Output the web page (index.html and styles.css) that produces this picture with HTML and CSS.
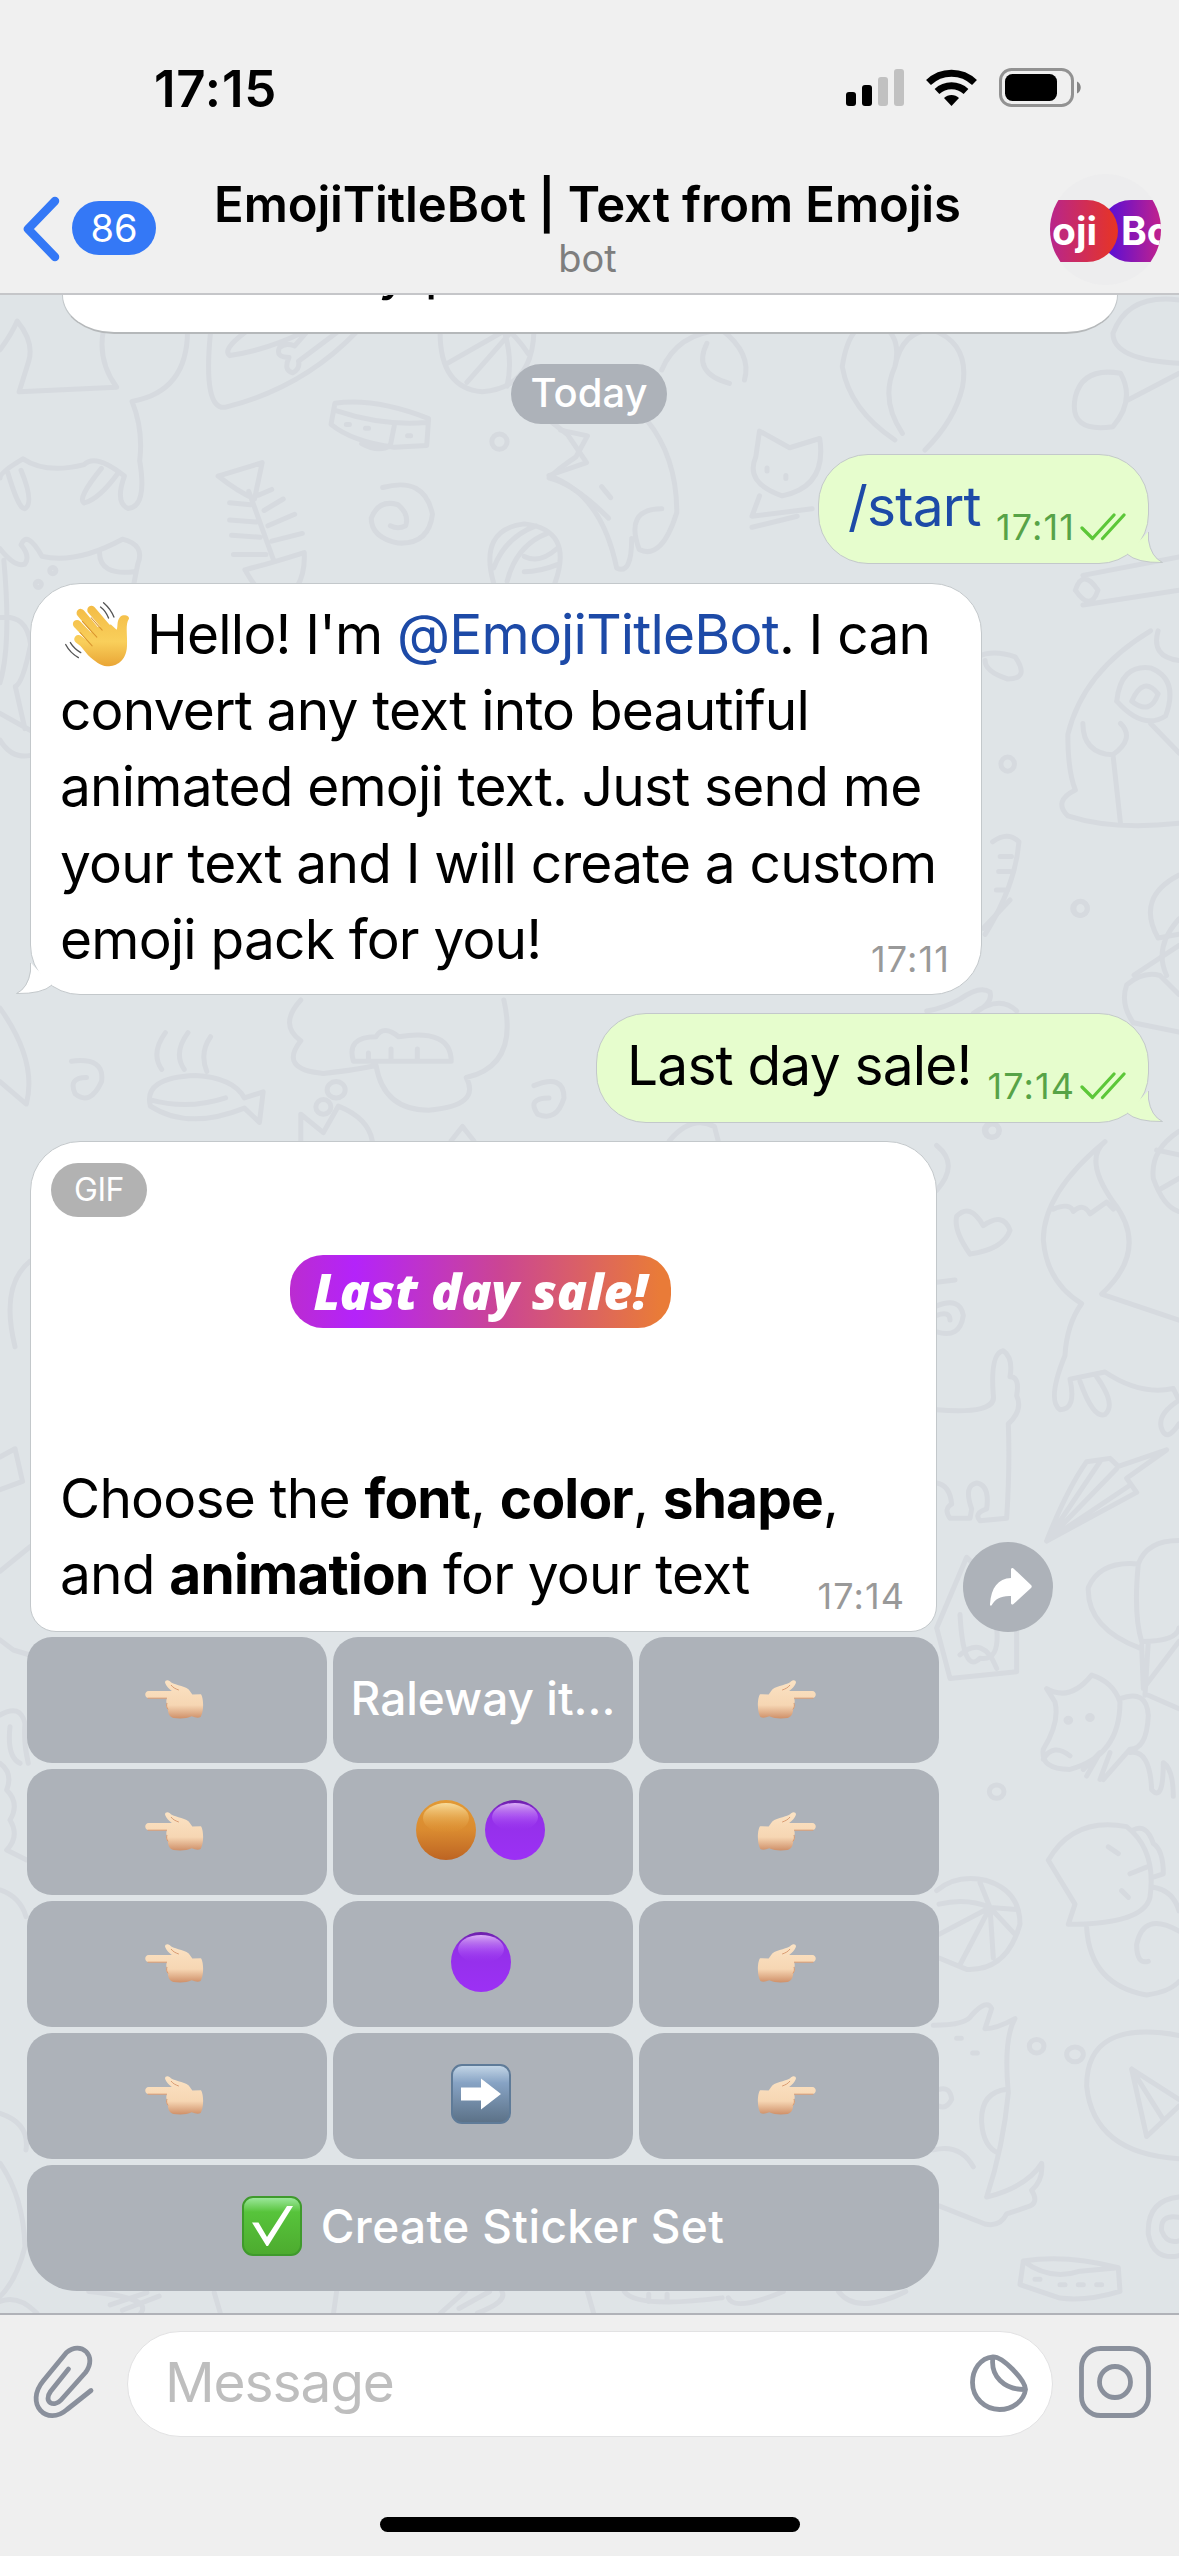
FILE: index.html
```html
<!DOCTYPE html>
<html lang="en">
<head>
    <meta charset="UTF-8">
    <meta name="viewport" content="width=device-width, initial-scale=1.0">
    <title>EmojiTitleBot | Text from Emojis</title>
    <link rel="stylesheet" href="styles.css">
</head>
<body>

    <!-- shared shapes -->
    <svg class="defs" width="0" height="0">
        <defs>
            <linearGradient id="skin" x1="0" y1="0" x2="0" y2="1">
                <stop offset="0" stop-color="#fbe3c4"/>
                <stop offset="0.65" stop-color="#f6d6b3"/>
                <stop offset="1" stop-color="#cf9069"/>
            </linearGradient>
            <linearGradient id="orange" x1="0" y1="0" x2="0" y2="1">
                <stop offset="0" stop-color="#e29a35"/>
                <stop offset="0.5" stop-color="#da8b30"/>
                <stop offset="1" stop-color="#bd6423"/>
            </linearGradient>
            <linearGradient id="orangeShine" x1="0" y1="0" x2="0" y2="1">
                <stop offset="0" stop-color="#f8dc9c"/>
                <stop offset="1" stop-color="#e29a35" stop-opacity="0"/>
            </linearGradient>
            <linearGradient id="purple" x1="0" y1="0" x2="0" y2="1">
                <stop offset="0" stop-color="#6c20a8"/>
                <stop offset="0.25" stop-color="#9330e8"/>
                <stop offset="1" stop-color="#9c30f5"/>
            </linearGradient>
            <linearGradient id="purpleShine" x1="0" y1="0" x2="0" y2="1">
                <stop offset="0" stop-color="#dcaef9"/>
                <stop offset="1" stop-color="#9c30f5" stop-opacity="0"/>
            </linearGradient>
            <linearGradient id="wave" gradientUnits="userSpaceOnUse" x1="0" y1="130" x2="0" y2="316">
                <stop offset="0" stop-color="#f3bb45"/>
                <stop offset="0.6" stop-color="#f9cf5b"/>
                <stop offset="1" stop-color="#e9a535"/>
            </linearGradient>
            <symbol id="hand" viewBox="435 148 178 118">
                <path fill="url(#skin)" d="M446 181h70c-9-6-16-14-20-23-3-8 6-12 14-6 8 11 42 12 57 25l11 15 26-1c8 10 10 52-1 69-9 4-17 1-27-2-16 8-40 7-55 5-12-4-16-12-17-26-5-6-4-12-3-17-3-6-2-12 0-17h-55c-14 0-14-22 0-22z"/>
                <path fill="none" stroke="#d99a70" stroke-width="3" stroke-linecap="round" d="M444 203h56M501 219c-2 6-1 12 3 17M514 164c6 8 14 11 22 14"/>
            </symbol>
            <symbol id="ticks" viewBox="0 0 46 28">
                <path fill="none" stroke="#5cc738" stroke-width="3.2" stroke-linecap="round" stroke-linejoin="round" d="M2 15l10.500 10.500L34 2M22.500 25.500L44 2"/>
            </symbol>
            <symbol id="ballPurple" viewBox="0 0 60 60">
                <circle cx="30" cy="30" r="30" fill="url(#purple)"/>
                <ellipse cx="30" cy="17" rx="23" ry="14" fill="url(#purpleShine)"/>
            </symbol>
            <symbol id="ballOrange" viewBox="0 0 60 60">
                <circle cx="30" cy="30" r="30" fill="url(#orange)"/>
                <ellipse cx="30" cy="18" rx="23" ry="15" fill="url(#orangeShine)"/>
            </symbol>
        </defs>
    </svg>

    <header class="header">
        <div class="status">
            <span class="clock">17:15</span>
            <div class="status-icons">
                <svg width="58" height="38" viewBox="0 0 58 38">
                    <rect x="0" y="23" width="10" height="14" rx="3"/>
                    <rect x="16" y="16" width="10" height="21" rx="3"/>
                    <rect x="32" y="8" width="10" height="29" rx="3" fill="#c1c1c1"/>
                    <rect x="48" y="0" width="10" height="37" rx="3" fill="#c1c1c1"/>
                </svg>
                <svg class="wifi" width="51" height="37" viewBox="0 0 51 37">
                    <path fill="none" stroke="#000" stroke-width="7" d="M2.500 13.500a33 33 0 0 1 46 0M11 22.500a21.500 21.500 0 0 1 29 0"/>
                    <path d="M25.500 37l-7.500-8c4-4 11-4 15 0z"/>
                </svg>
                <svg class="battery" width="83" height="40" viewBox="0 0 83 40">
                    <rect x="1.500" y="1.500" width="72" height="36" rx="11" fill="none" stroke="#929292" stroke-width="3"/>
                    <rect x="6" y="6" width="52" height="27" rx="7.500"/>
                    <path fill="#858585" d="M78 13.500c5 2 5 10 0 12z"/>
                </svg>
            </div>
        </div>
        <div class="nav">
            <div class="back">
                <svg width="37" height="66" viewBox="0 0 37 66"><path fill="none" stroke="#3478f6" stroke-width="8.500" stroke-linecap="round" stroke-linejoin="round" d="M32 5L5 33l27 28"/></svg>
                <span class="badge">86</span>
            </div>
            <div class="title">
                <h1>EmojiTitleBot | Text from Emojis</h1>
                <p>bot</p>
            </div>
            <div class="avatar">
                <div class="avatar-band">
                    <span class="avatar-right">Bo</span>
                    <span class="avatar-left">oji</span>
                </div>
            </div>
        </div>
    </header>

    <main class="chat">
        <svg class="wallpaper" width="1179" height="2018" viewBox="0 295 1179 2018">
            <!-- top left -->
            <g transform="translate(0 300) scale(.3827)">
                <path d="M0 130Q30 90 45 55Q90 110 75 160L50 240L305 228Q255 160 270 80M490 80Q490 240 345 265Q375 340 365 420Q385 540 335 545Q300 530 325 460Q250 400 220 430Q120 455 60 415Q0 450 0 465M20 450Q50 550 65 545Q90 530 55 445M220 530Q200 520 265 440M220 530Q260 520 310 450"/>
                <path d="M550 85Q530 290 590 280Q790 230 930 85M600 145Q700 130 790 85M600 145Q580 130 640 85M765 190Q740 185 755 150Q720 150 730 125Q745 110 770 120L800 85M765 190Q785 180 780 160L880 85"/>
                <path d="M1150 85Q1150 230 1260 240Q1390 230 1395 85M1170 165L1310 85M1220 215L1330 90M1325 225Q1340 160 1320 90M1380 140Q1360 110 1340 90"/>
                <path d="M875 270Q980 255 1120 310L1115 380L1030 385Q920 370 865 325ZM880 290Q1000 330 1115 320M945 375Q990 400 1020 380L1030 330M905 325h8M955 335h8M1065 355h8"/>
                <path d="M570 460L685 425L665 520Q620 500 570 460M650 500L715 680M600 530L655 535M600 575L670 580M605 615L680 620M610 665L695 665M675 510L710 495M690 550L740 520M700 590L770 560M710 630L790 610M640 705Q700 690 795 660Q800 760 720 800Q670 760 640 705"/>
                <path d="M1000 490Q1110 460 1130 560Q1120 640 1040 635Q970 620 970 570Q990 520 1040 535Q1070 560 1060 590Q1040 600 1020 590"/>
                <circle cx="1305" cy="370" r="20"/>
                <path d="M1465 340L1535 355L1505 410Q1460 440 1435 465Q1500 480 1590 570"/>
                <path d="M1290 740Q1250 600 1370 585Q1500 600 1450 740M1290 700Q1320 620 1400 590M1325 735Q1350 640 1430 610M1370 670Q1410 690 1455 650M1370 710Q1410 710 1460 690"/>
                <path d="M0 650Q40 700 65 690Q80 670 55 640Q70 600 110 670Q200 690 320 625Q380 640 360 690L350 740M260 660Q260 720 350 710M10 680Q30 900 0 1000M0 830Q70 820 80 900Q60 1000 40 1010L65 1120M0 1080L80 1125M0 1150Q30 1200 80 1190"/>
                <circle cx="138" cy="707" r="8"/><circle cx="100" cy="743" r="8"/>
            </g>
            <!-- top right -->
            <g transform="translate(0 300) scale(.752 .3333)">
                <path d="M1120 200Q1130 50 1170 70Q1200 110 1190 200Q1200 90 1240 90Q1290 130 1280 260Q1270 360 1230 450M1120 200Q1130 330 1190 420M1190 200Q1170 300 1200 400M1480 100Q1500 -20 1568 0M1480 100Q1480 180 1568 190M1430 290Q1440 200 1490 220Q1510 300 1480 380Q1420 400 1430 290M1500 300L1568 220"/>
                <path d="M880 210Q900 100 960 90Q1000 160 990 240M940 130Q920 220 970 250"/>
            </g>
            <g transform="translate(0 420) scale(.752 .37)">
                <path d="M730 150L780 115L755 40L730 0M730 150Q800 200 820 400Q840 420 840 320M860 0Q900 100 900 250Q880 380 850 350Q830 240 880 240M800 180L812 210"/>
                <path d="M1010 30L1050 75L1090 50Q1100 180 1040 205Q990 170 1005 100ZM1010 205L1000 260L1080 240M1000 290L1060 260M1020 130v8M1045 150v8"/>
                <path d="M1440 420L1568 370M1440 500L1568 460M1430 460Q1440 400 1460 460Q1450 520 1430 460M1300 640Q1320 620 1350 640Q1370 700 1340 700Q1310 680 1310 650"/>
                <path d="M1530 570Q1440 680 1420 850Q1420 950 1430 1000Q1400 1030 1420 1070Q1480 1110 1568 1090M1540 570Q1530 640 1568 650M1485 760Q1490 660 1530 670Q1568 700 1550 800Q1520 840 1485 760M1505 760Q1520 690 1540 740Q1530 800 1505 760M1440 820Q1440 900 1480 905Q1510 860 1490 820M1480 905L1490 1090M1530 820L1568 900"/>
                <path d="M1320 1140Q1340 1110 1355 1140Q1350 1260 1310 1390M1330 1180h15M1328 1220h15M1325 1270h15M1568 1230Q1510 1290 1540 1400L1568 1390M1508 1500L1568 1420"/>
                <ellipse cx="1340" cy="930" rx="9" ry="19"/><ellipse cx="1437" cy="1320" rx="9" ry="19"/>
            </g>
            <!-- middle -->
            <g transform="translate(0 1000) scale(.752 .408)">
                <path d="M0 20Q50 150 35 255L0 200M95 150Q140 140 135 200Q120 260 100 230Q90 190 115 190M200 260Q190 190 260 185Q310 190 325 240L350 225L345 300L325 265Q250 320 200 260M200 245Q250 270 300 240M215 170Q200 130 220 80M245 170Q230 130 250 80M275 175Q265 130 280 90"/>
                <path d="M400 0Q370 60 400 100Q370 170 430 180Q480 170 500 160Q510 270 570 270Q640 260 620 190Q690 160 670 0M470 150Q460 90 500 90Q510 60 530 90Q600 70 600 150ZM490 130v20M520 120v30M555 120v30M400 345L400 280L430 325L450 260Q490 290 495 345M600 345L615 310L630 345M710 210Q750 180 750 240Q740 300 715 280Q700 240 730 240M890 345Q920 280 950 310L955 345"/>
                <ellipse cx="447" cy="220" rx="12" ry="20"/><ellipse cx="430" cy="262" rx="10" ry="18"/><ellipse cx="1320" cy="320" rx="9" ry="16"/>
                <path d="M20 850Q0 700 40 640M0 1120L20 1100L30 1180L0 1200M0 1400L40 1340"/>
            </g>
            <!-- right, fox tail and friends -->
            <g transform="translate(900 900) scale(.3333 .472)">
                <path d="M250 60L330 0M80 235Q130 230 180 210Q240 180 270 195Q280 220 220 240Q300 200 350 235M700 260Q660 220 680 180Q730 150 780 160L837 200M700 260L837 280M837 40Q760 100 800 160"/>
                <path d="M615 512Q430 620 430 720Q440 810 545 855Q500 900 495 965Q440 1060 480 1080Q530 1080 510 1015L615 1000Q720 1050 820 1035L837 1060M615 512Q550 550 640 640Q750 740 605 835L837 890M460 655Q510 640 520 660Q550 640 570 665L620 640L640 655M540 1020Q580 1100 615 1090Q650 1070 590 1010M837 1060Q770 1090 785 1120Q800 1150 837 1110"/>
                <path d="M210 750Q160 700 170 670Q210 640 250 690Q310 660 330 700Q310 740 210 750M110 810L165 805M110 860Q180 840 190 880Q180 930 110 915M110 880Q150 870 150 890M110 1080Q290 1090 280 1050Q270 960 310 955Q340 970 330 1010Q360 1010 350 1050Q370 1080 325 1110Q330 1200 320 1310L240 1315Q220 1300 260 1290Q270 1240 230 1235Q190 1240 215 1290L210 1310H150Q130 1290 155 1280Q150 1240 110 1235M110 520Q180 560 110 615"/>
                <path d="M440 1358Q500 1250 560 1190L630 1183L655 1200L800 1165L680 1225L710 1255ZM440 1358L600 1190M440 1358L650 1205M440 1358L690 1240M837 490Q750 530 760 590Q790 650 837 660M770 530L837 540M775 615L837 590"/>
                <ellipse cx="275" cy="488" rx="22" ry="15"/><ellipse cx="540" cy="18" rx="22" ry="15"/>
            </g>
            <!-- right, lower part -->
            <g transform="translate(900 1500) scale(.3333 .6735)">
                <path d="M720 220Q560 190 565 130Q600 90 715 95Q700 170 725 210Q830 210 837 190M715 95Q740 60 837 60M725 215L730 280L837 210M735 290L745 210M110 190L200 85L250 110M110 190L150 265L350 255V190M180 170Q190 260 240 235Q300 240 290 190M180 230Q250 200 290 250"/>
                <path d="M440 280Q510 300 575 260Q640 270 660 300Q660 380 510 400Q420 400 430 370Q480 330 465 300ZM430 385Q460 360 510 380M550 400L600 375L560 410M600 415L630 375M660 295Q740 280 745 320Q740 370 690 370L610 415M745 290L837 310M690 375Q750 370 755 430Q790 450 790 390Q820 400 820 440"/>
                <ellipse cx="505" cy="327" rx="7" ry="3"/><ellipse cx="570" cy="323" rx="7" ry="3"/><ellipse cx="290" cy="433" rx="22" ry="10"/><ellipse cx="410" cy="811" rx="22" ry="10"/><ellipse cx="525" cy="823" rx="25" ry="11"/>
                <path d="M445 535Q520 470 680 485Q770 520 750 590Q730 630 505 630L525 600ZM700 490Q740 480 760 510Q790 520 790 555L760 560M625 515L655 525M665 580L685 590M690 555L740 545M560 635Q570 720 740 735Q810 730 837 715M710 660Q730 610 837 640M710 660Q710 690 745 685M760 575Q820 580 837 610"/>
                <path d="M110 580Q170 555 260 565Q360 580 360 630Q320 700 200 697L117 680M117 600Q200 590 270 605L117 645M180 690L270 605L280 680M270 605L345 645M270 605L350 608M270 605L240 568"/>
                <path d="M100 780Q200 780 215 765Q260 740 275 755L255 785Q290 785 345 770Q310 800 325 880Q310 960 260 1035Q380 1020 425 985Q430 1010 395 1025Q420 1045 380 1050L320 1060Q300 1080 255 1075L117 1048M320 875Q240 880 245 925Q250 960 295 970M100 965Q180 955 220 990M117 875Q150 870 155 890Q140 905 117 900M170 799h14M218 821h14"/>
                <path d="M837 795Q560 770 560 870Q580 970 837 978M695 845L740 945L837 900M695 845L837 890M695 845L790 920M837 1035Q740 1040 745 1090Q760 1130 837 1122M837 1065Q780 1060 785 1085Q800 1105 837 1100M370 1130Q500 1120 655 1140L660 1175Q560 1190 480 1185L360 1165ZM370 1130Q450 1160 540 1145L655 1140M405 1157h15M480 1165h15M535 1165h15M590 1165h15"/>
            </g>
            <!-- left gutter and below the keyboard -->
            <g transform="translate(0 1630) scale(.3333)">
                <path d="M0 30L40 60L90 75M0 255Q60 220 75 280Q70 340 85 400M30 290Q20 380 60 400M0 400Q40 430 20 480Q60 520 30 570Q60 620 20 660L80 690M0 780Q60 800 78 860M0 1450Q90 1480 78 1560M0 1600Q70 1700 75 1850Q50 1950 0 2000"/>
            </g>
            <g transform="translate(0 2000) scale(.612 .3546)">
                <path d="M145 822Q250 840 230 883M180 860L240 825M200 875L260 835M350 825L360 883M0 850Q30 830 60 883M550 822L545 883M720 883L760 822M750 870L800 822M780 883Q830 850 820 822M960 822L970 883M1020 822Q1040 870 1180 840M1060 850v-20M1090 850v-20M1190 840Q1200 880 1280 822M1370 822Q1400 890 1480 822"/>
            </g>
        </svg>

        <div class="message previous"><span>y p</span></div>

        <div class="date">Today</div>

        <div class="message out start">
            <svg class="tail" width="36" height="32" viewBox="0 0 36 32"><path class="tail-fill" d="M21 0v8Q24 25 35.500 30.500Q10 31 0 22z"/><path class="tail-line" d="M21.500 0v8Q24 25 35.500 30.500Q10 31 0 22"/></svg>
            <a class="text">/start</a>
            <span class="time">17:11</span>
            <svg class="ticks" width="46" height="28"><use href="#ticks"/></svg>
        </div>

        <div class="message in hello">
            <svg class="tail" width="36" height="32" viewBox="0 0 36 32"><path class="tail-fill" d="M21 0v8Q24 25 35.500 30.500Q10 31 0 22z"/><path class="tail-line" d="M21.500 0v8Q24 25 35.500 30.500Q10 31 0 22"/></svg>
            <p class="text">
                <svg class="wave" width="67" height="67" viewBox="190 120 200 200">
                    <g stroke="url(#wave)" stroke-width="25" stroke-linecap="round" fill="none">
                        <path d="M272 147L330 215M240 156L310 240M229 189L300 262M233 234L300 285"/>
                    </g>
                    <path fill="url(#wave)" d="M283 200L330 190L347 206C352 196 346 180 358 167C368 158 386 164 384 173C372 190 380 220 378 255C376 300 345 316 318 315C300 314 282 300 262 282L240 255z"/>
                    <path fill="none" stroke="#d9952f" stroke-width="3" stroke-linecap="round" d="M271 170L304 207M245 181L288 228M238 214L274 254"/>
                    <path fill="none" stroke="#555" stroke-width="4" stroke-linecap="round" d="M308 125Q330 144 339 168M299 138Q315 150 323 171M195 250Q208 275 233 289M209 244Q220 262 240 274"/>
                </svg>Hello! I'm <a>@EmojiTitleBot</a>. I can<br>
                convert any text into beautiful<br>
                animated emoji text. Just send me<br>
                your text and I will create a custom<br>
                emoji pack for you!
            </p>
            <span class="time">17:11</span>
        </div>

        <div class="message out sale">
            <svg class="tail" width="36" height="32" viewBox="0 0 36 32"><path class="tail-fill" d="M21 0v8Q24 25 35.500 30.500Q10 31 0 22z"/><path class="tail-line" d="M21.500 0v8Q24 25 35.500 30.500Q10 31 0 22"/></svg>
            <span class="text">Last day sale!</span>
            <span class="time">17:14</span>
            <svg class="ticks" width="46" height="28"><use href="#ticks"/></svg>
        </div>

        <div class="row">
            <div class="message in preview">
                <span class="gif">GIF</span>
                <div class="sticker">Last day sale!</div>
                <p class="text">
                    Choose the <b>font</b>, <b>color</b>, <b>shape</b>,<br>
                    and <b>animation</b> for your text
                </p>
                <span class="time">17:14</span>
            </div>
            <div class="share">
                <svg width="42" height="38" viewBox="0 0 42 38"><path fill="#fff" d="M21 1.500c0-1.500 1.500-2 2.500-1L41 17c1 1 1 2 0 3L23.500 36c-1 1-2.500.5-2.500-1V28C11 27.500 5 31 1.500 37.500 0 38 0 37 0 36 1 20 8 10.500 21 10z"/></svg>
            </div>
        </div>

        <div class="keyboard">
            <button><svg class="hand" width="59" height="39"><use href="#hand"/></svg></button>
            <button><span class="label">Raleway it...</span></button>
            <button><svg class="hand right" width="59" height="39"><use href="#hand"/></svg></button>

            <button><svg class="hand" width="59" height="39"><use href="#hand"/></svg></button>
            <button class="pair"><svg width="60" height="60"><use href="#ballOrange"/></svg><svg width="60" height="60"><use href="#ballPurple"/></svg></button>
            <button><svg class="hand right" width="59" height="39"><use href="#hand"/></svg></button>

            <button><svg class="hand" width="59" height="39"><use href="#hand"/></svg></button>
            <button><svg class="emoji" width="60" height="60"><use href="#ballPurple"/></svg></button>
            <button><svg class="hand right" width="59" height="39"><use href="#hand"/></svg></button>

            <button><svg class="hand" width="59" height="39"><use href="#hand"/></svg></button>
            <button><span class="emoji square blue"><svg width="40" height="34" viewBox="0 0 40 34"><path fill="#fff" d="M0 10.500h20V1.500L40 17 20 32.500v-9H0z"/></svg></span></button>
            <button><svg class="hand right" width="59" height="39"><use href="#hand"/></svg></button>

            <button class="wide"><span class="emoji square green"><svg width="42" height="42" viewBox="0 0 42 42"><path fill="#fff" d="M1 17.500h6.500L16 32 36 1h6L17 41h-1.500z"/></svg></span><span class="label">Create Sticker Set</span></button>
        </div>
    </main>

    <footer class="composer">
        <svg class="clip" width="64" height="74" viewBox="0 0 64 74">
            <path fill="none" stroke="#8a909c" stroke-width="4.800" stroke-linecap="round" stroke-linejoin="round" d="M36.500 24L18.500 46.500C11 57 22 63 29 55L53.500 27.500C66 11 49 -5 34.500 7.500L11.500 35.500C-8 59 15 82 35 64.500L59 45.500"/>
        </svg>
        <div class="field">
            <span>Message</span>
            <svg width="58" height="58" viewBox="0 0 58 58"><path fill="none" stroke="#8a909c" stroke-width="4.800" stroke-linejoin="round" d="M23 2.800C10 4 2.500 16 2.500 28.500 2.500 44 15 55.500 29.500 55.500 43 55.500 54 46.500 55.500 35.500 55 26 33 2.500 23 2.800zC20 22 34 36 55.500 35.500"/></svg>
        </div>
        <svg class="camera" width="72" height="72" viewBox="0 0 72 72">
            <rect x="2.500" y="2.500" width="67" height="67" rx="19" fill="none" stroke="#8a909c" stroke-width="4.800"/>
            <circle cx="36" cy="36" r="15.500" fill="none" stroke="#8a909c" stroke-width="4.800"/>
        </svg>
    </footer>
    <div class="home"><span></span></div>

</body>
</html>
```

FILE: styles.css
```css
* {
    margin: 0;
    padding: 0;
    box-sizing: border-box;
    font-family: Inter, "Liberation Sans", sans-serif;
}

body {
    display: flex;
    flex-direction: column;
    width: 1179px;
    height: 2556px;
    background-color: #efefef;
    overflow: hidden;
}

svg {
    display: block;
    flex: none;
}

.defs {
    position: absolute;
}

/* header */

.header {
    height: 295px;
    background: #f0f0f0;
    border-bottom: 2px solid #c5c6c9;
    flex: none;
}

.status {
    display: flex;
    justify-content: space-between;
    height: 174px;
    padding: 69px 97px 0 154px;
}

.clock {
    font-size: 51px;
    line-height: 40px;
    font-weight: 600;
    letter-spacing: 0.8px;
}

.status-icons {
    display: flex;
}

.wifi {
    margin-left: 22px;
}

.battery {
    margin: -1px 0 0 22px;
}

.nav {
    display: flex;
    justify-content: space-between;
    height: 119px;
    padding: 0 18px 0 23px;
}

.back {
    display: flex;
    align-items: center;
    width: 160px;
    height: 110px;
}

.badge {
    width: 84px;
    height: 54px;
    margin: -2px 0 0 12px;
    border-radius: 27px;
    background: #3478f6;
    color: #fff;
    font-size: 38px;
    line-height: 54px;
    text-align: center;
}

.title {
    margin-right: 58px;
    text-align: center;
    white-space: nowrap;
}

.title h1 {
    font-size: 49px;
    line-height: 61px;
    font-weight: 600;
    letter-spacing: -0.1px;
}

.title p {
    font-size: 38px;
    line-height: 46px;
    color: #7e7e7e;
}

.avatar {
    width: 111px;
    height: 111px;
    border-radius: 50%;
    background: #ededee;
    overflow: hidden;
    padding-top: 26px;
}

.avatar-band {
    display: flex;
    flex-direction: row-reverse;
    height: 62px;
    color: #fff;
    font-size: 39px;
    font-weight: 700;
    line-height: 61px;
}

.avatar-left {
    flex: none;
    width: 68px;
    padding-left: 2px;
    border-radius: 0 31px 31px 0;
    background: linear-gradient(90deg, #b8258c, #e83522);
    z-index: 1;
}

.avatar-right {
    flex: none;
    width: 61px;
    margin-left: -18px;
    padding-left: 21px;
    border-radius: 31px 0 0 31px;
    background: linear-gradient(90deg, #4a0be0, #c2228c);
}

/* chat */

.chat {
    position: relative;
    flex: none;
    height: 2018px;
    background: #dfe4e7;
    overflow: hidden;
    z-index: 0;
}

.wallpaper {
    position: absolute;
    inset: 0;
    z-index: -1;
}

.wallpaper path,
.wallpaper circle,
.wallpaper ellipse {
    fill: none;
    stroke: #d6dadf;
    stroke-width: 5px;
    stroke-linecap: round;
    stroke-linejoin: round;
    vector-effect: non-scaling-stroke;
}

.message {
    position: relative;
    border: 1px solid #c3c8cb;
    border-radius: 50px;
    background: #fff;
    color: #000;
}

.message .text {
    font-size: 55px;
    line-height: 76.2px;
    letter-spacing: -0.8px;
    white-space: nowrap;
}

.message a {
    color: #1d4aa7;
}

.message .time {
    font-size: 36px;
    line-height: 40px;
    letter-spacing: 1.1px;
    color: #999;
}

.previous {
    width: 1056px;
    height: 39px;
    margin-left: 62px;
    border-top: 0;
    border-bottom: 2px solid #b5b8ba;
    border-radius: 0 0 52px 52px / 0 0 39px 39px;
    overflow: hidden;
}

.previous span {
    display: block;
    margin: -64px 0 0 315px;
    font-size: 55px;
    line-height: 76px;
}

.date {
    width: 156px;
    height: 60px;
    margin: 30px 0 30px 511px;
    border-radius: 30px;
    background: #adb2b9;
    color: #fff;
    font-size: 40px;
    font-weight: 500;
    line-height: 57px;
    text-align: center;
}

.out {
    display: flex;
    height: 110px;
    margin-left: auto;
    margin-right: 30px;
    padding: 13px 22px 0 29px;
    background: #e6fdcd;
}

.out .time {
    margin: 39px 0 0 auto;
    color: #57a347;
}

.out .ticks {
    margin: 45px 0 0 5px;
}

.tail {
    position: absolute;
    right: -15px;
    bottom: -1px;
}

.tail-fill {
    fill: #fff;
}

.out .tail-fill {
    fill: #e6fdcd;
}

.tail-line {
    fill: none;
    stroke: #c3c8cb;
}

.start {
    width: 331px;
}

.hello {
    width: 952px;
    height: 412px;
    margin: 19px 0 18px 30px;
    padding: 12px 29px;
}

.in .tail {
    right: auto;
    left: -15px;
    transform: scaleX(-1);
}

.in .time {
    position: absolute;
    right: 31px;
    bottom: 15px;
}

.wave {
    display: inline-block;
    margin: -14px 16px -14px 4px;
    vertical-align: 0;
}

.sale {
    width: 553px;
    padding-left: 30px;
}

.row {
    display: flex;
    align-items: flex-end;
    margin: 18px 0 5px 30px;
    gap: 26px;
}

.preview {
    width: 907px;
    height: 491px;
    border-radius: 50px 50px 26px 26px;
    padding: 21px 29px 0;
}

.gif {
    display: block;
    width: 96px;
    height: 54px;
    margin-left: -9px;
    border-radius: 27px;
    background: #b2b2b2;
    color: #fff;
    font-size: 32px;
    line-height: 54px;
    letter-spacing: -0.5px;
    text-align: center;
}

.sticker {
    width: 381px;
    height: 73px;
    margin: 38px 0 132px 230px;
    border-radius: 33px;
    background: linear-gradient(90deg, #bb2cd0, #b423fa 17%, #cb4594 55%, #e97b38 97%);
    color: #fff;
    font: italic 800 50px/73px "Open Sans", sans-serif;
    text-align: center;
    white-space: nowrap;
}

.share {
    display: flex;
    align-items: center;
    justify-content: center;
    width: 90px;
    height: 90px;
    padding-left: 5px;
    border-radius: 50%;
    background: #adb2b9;
}

/* inline keyboard */

.keyboard {
    display: grid;
    grid-template-columns: repeat(3, 300px);
    grid-auto-rows: 126px;
    gap: 6px;
    margin-left: 27px;
}

.keyboard button {
    display: flex;
    align-items: center;
    justify-content: center;
    border: 0;
    border-radius: 25px;
    background: #adb2b9;
    color: #fff;
    font-size: 46px;
    font-weight: 500;
}

.keyboard .wide {
    grid-column: 1 / 4;
    border-radius: 25px 25px 50px 50px;
    gap: 19px;
}

.label {
    margin-top: -4px;
}

.wide .label {
    letter-spacing: 0.4px;
}

.hand {
    margin: -2px 0 0 -5px;
}

.right {
    transform: scaleX(-1);
}

.pair {
    gap: 9px;
}

.pair svg,
.emoji {
    margin-top: -4px;
}

.emoji,
.pair svg:first-child {
    margin-left: -5px;
}

.wide .emoji {
    margin-left: 0;
}

.square {
    display: flex;
    align-items: center;
    justify-content: center;
    width: 60px;
    height: 60px;
    border-radius: 11px;
}

.blue {
    background: linear-gradient(#c2d5e6, #87a3c4 30%, #5c7288);
    border: 2px solid #5f7b98;
}

.green {
    background: linear-gradient(#9be79a, #57c43b 25%, #4dab2f);
    border: 2px solid #3f9a2c;
}

/* composer */

.composer {
    display: flex;
    height: 170px;
    padding: 16px 28px 0 32px;
    border-top: 2px solid #b0b2b8;
    background: #efefef;
}

.clip {
    margin: 14px 0 0;
}

.field {
    display: flex;
    align-items: center;
    justify-content: space-between;
    width: 926px;
    height: 106px;
    margin-left: 31px;
    padding: 0 24px 0 37px;
    border: 1px solid #e2e2e3;
    border-radius: 53px;
    background: #fff;
    color: #bebebe;
    font-size: 55px;
    letter-spacing: -1.1px;
}

.field span {
    margin-top: -4px;
}

.field svg {
    margin-top: -3px;
}

.camera {
    margin: 15px 0 0 auto;
}

.home {
    padding-top: 34px;
}

.home span {
    display: block;
    width: 420px;
    height: 15px;
    margin: 0 auto;
    border-radius: 8px;
    background: #000;
}
```
